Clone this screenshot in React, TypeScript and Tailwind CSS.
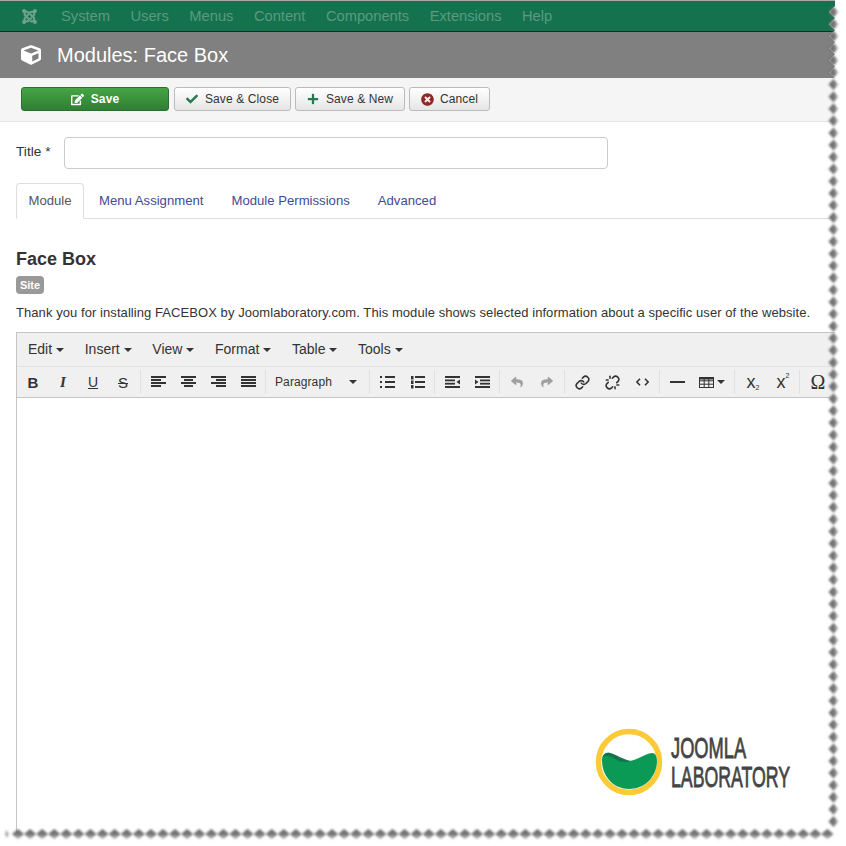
import React from "react";
import { FaJoomla, FaCube, FaEdit, FaCheck, FaPlus, FaTimesCircle, FaReply, FaShare } from "react-icons/fa";
import { Link, Unlink } from "lucide-react";

const Caret = ({ color = "#333" }: { color?: string }) => (
  <svg width="8" height="4" viewBox="0 0 8 4" className="shrink-0"><path d="M0 0h8L4 4z" fill={color} /></svg>
);

const Lines = ({ rows }: { rows: [number, number][] }) => (
  <svg width="15" height="12" viewBox="0 0 15 12">
    {rows.map(([x, w], i) => (
      <rect key={i} x={x} y={i * 3} width={w} height="2" fill="#333" />
    ))}
  </svg>
);

const Btn = ({ children, w = "w-[30px]" }: { children: React.ReactNode; w?: string }) => (
  <div className={`${w} h-[24px] flex items-center justify-center shrink-0 text-[#333]`}>{children}</div>
);

const Group = ({ children }: { children: React.ReactNode }) => (
  <div className="flex items-center ml-[2px] pl-[2px] h-[24px] border-l border-[#e0e0e0] shrink-0">{children}</div>
);

const ListIcon = ({ numbered }: { numbered?: boolean }) => (
  <svg width="15" height="13" viewBox="0 0 15 13" fill="#333">
    {[0, 5, 10].map((y) => <rect key={y} x="5" y={y} width="10" height="2" />)}
    {numbered
      ? [0, 4.5, 9].map((y) => <rect key={y} x="1" y={y} width="2.5" height="3.5" />)
      : [0, 5, 10].map((y) => <rect key={y} x="0" y={y} width="2" height="2" />)}
  </svg>
);

const Indent = ({ out }: { out?: boolean }) => (
  <svg width="15" height="12" viewBox="0 0 15 12" fill="#333">
    <rect x="0" y="0" width="15" height="2" />
    <rect x="0" y="10" width="15" height="2" />
    <rect x={out ? 0 : 5} y="3.5" width="10" height="1.8" />
    <rect x={out ? 0 : 5} y="6.8" width="10" height="1.8" />
    {out ? <path d="M15 3.5v5L11.5 6z" /> : <path d="M0 3.5v5L3.5 6z" />}
  </svg>
);

const TornEdge = () => {
  const P = 12.08;
  const right = Array.from({ length: 68 }, (_, k) => (k + 1) * P);
  const bottom = Array.from({ length: 68 }, (_, k) => 18 + k * P);
  let z = "";
  right.forEach((y) => { z += `L835 ${y - P / 2} L829 ${y} `; });
  const zig = `M0 0 L835 0 ${z} L835 835 L0 835 Z`;
  return (
    <svg aria-hidden="true" width="846" height="846" viewBox="0 0 846 846" className="absolute left-0 top-0 pointer-events-none">
      <defs>
        <filter id="soft" x="-30%" y="-30%" width="160%" height="160%"><feGaussianBlur stdDeviation="0.8" /></filter>
        <linearGradient id="gr" x1="0" y1="0" x2="1" y2="0">
          <stop offset="0" stopColor="#686868" /><stop offset="0.6" stopColor="#787878" /><stop offset="1" stopColor="#cccccc" />
        </linearGradient>
        <linearGradient id="gb" x1="0" y1="0" x2="0" y2="1">
          <stop offset="0" stopColor="#686868" /><stop offset="0.55" stopColor="#787878" /><stop offset="1" stopColor="#d8d8d8" />
        </linearGradient>
      </defs>
      <path d={`M0 0H846V846H0Z ${zig}`} fill="#fff" fillRule="evenodd" />
      <g filter="url(#soft)">
        {right.filter((y) => y < 826).map((y) => (
          <path key={y} d={`M828.5 ${y} L833.5 ${y - 5.5} L838.5 ${y} L833.5 ${y + 5.5}Z`} fill="url(#gr)" />
        ))}
        {bottom.filter((x) => x < 835).map((x) => (
          <path key={x} d={`M${x - 6} 834 L${x} 829 L${x + 6} 834 L${x} 839.5Z`} fill="url(#gb)" />
        ))}
        <path d="M6 830 L9 834 L7 838 L5 834Z" fill="#aaa" />
      </g>
    </svg>
  );
};

const Logo = () => (
  <svg width="256" height="80" viewBox="0 0 256 80" className="absolute left-[590px] top-[722px]">
    <circle cx="39" cy="40" r="30.5" fill="#fff" stroke="#fcc937" strokeWidth="5.5" />
    <path d="M12 38 C12 33 15 30 20 31 C27 33 31 39 39 39 C48 38 54 32 62 31 C66 31 67 35 67 40 C66 56 54 67 39 67 C24 67 12 55 12 38Z" fill="#0a9a55" />
    <path d="M13 35 C14 32 16 30 20 31 C27 33 32 37 40 38.7 C35 41 29 40 25 37 C21 34 16 33 13 35Z" fill="#13744e" />
    <text transform="translate(81 36) scale(0.63 1)" fontFamily="'Liberation Sans',sans-serif" stroke="#444" strokeWidth="0.8" fontSize="29" fill="#444">JOOMLA</text>
    <text transform="translate(81 65) scale(0.611 1)" fontFamily="'Liberation Sans',sans-serif" stroke="#444" strokeWidth="0.8" fontSize="29" fill="#444">LABORATORY</text>
  </svg>
);

export default function App() {
  const nav = ["System", "Users", "Menus", "Content", "Components", "Extensions", "Help"];
  const menus = ["Edit", "Insert", "View", "Format", "Table", "Tools"];
  return (
    <div className="relative w-[846px] h-[846px] overflow-hidden bg-white font-['Liberation_Sans',Arial,sans-serif] text-[#333]">
      <div className="h-px bg-[#aaa]" />
      <div className="h-[31px] bg-[#15724e] border-b border-[#0b2f24] flex items-center">
        <FaJoomla className="ml-[21px] w-[17px] h-[17px] text-[#6fa38c]" />
        <div className="ml-[23px] flex gap-[20.5px] text-[14.7px] text-[#5b9a7f]">
          {nav.map((n) => <span key={n}>{n}</span>)}
        </div>
      </div>
      <div className="h-[46px] bg-[#808080] flex items-center text-white">
        <FaCube className="ml-[21px] w-[20px] h-[20px]" />
        <span className="ml-[16px] text-[20px]">Modules: Face Box</span>
      </div>
      <div className="h-[44px] bg-[#f5f5f5] border-b border-[#e3e3e3] flex items-start pt-[9px] pl-[21px] gap-[5px] text-[12px] tracking-[0.12px]">
        <button className="w-[148px] h-[24px] rounded-[3px] border border-[#2d6e30] bg-gradient-to-b from-[#46a546] to-[#2f7f33] text-white font-bold flex items-center justify-center gap-[7px]">
          <FaEdit className="w-[13px] h-[13px]" /><span>Save</span>
        </button>
        <button className="w-[117px] h-[24px] rounded-[3px] border border-[#bbb] bg-gradient-to-b from-white to-[#e6e6e6] flex items-center justify-center gap-[7px]">
          <FaCheck className="w-[12px] h-[12px] text-[#26794f]" /><span>Save &amp; Close</span>
        </button>
        <button className="w-[110px] h-[24px] -ml-px rounded-[3px] border border-[#bbb] bg-gradient-to-b from-white to-[#e6e6e6] flex items-center justify-center gap-[7px]">
          <FaPlus className="w-[12px] h-[12px] text-[#26794f]" /><span>Save &amp; New</span>
        </button>
        <button className="w-[81px] h-[24px] -ml-px rounded-[3px] border border-[#bbb] bg-gradient-to-b from-white to-[#e6e6e6] flex items-center justify-center gap-[6px]">
          <FaTimesCircle className="w-[13px] h-[13px] text-[#8c2c25]" /><span>Cancel</span>
        </button>
      </div>

      <div className="pl-[16px] pt-[15px] flex items-center">
        <label className="w-[48px] text-[13.7px] leading-[31px] -mt-[3px]">Title *</label>
        <div className="w-[544px] h-[32px] rounded-[4px] border border-[#ccc] bg-white" />
      </div>

      <div className="mt-[14px] ml-[16px] h-[36px] w-[830px] border-b border-[#ddd] flex gap-[2px] text-[13.15px] text-[#3f4a99]">
        <div className="w-[68px] h-[36px] border border-[#ddd] border-b-white rounded-t-[4px] text-[#555] bg-white flex items-center justify-center">Module</div>
        <div className="h-[35px] px-[13px] flex items-center">Menu Assignment</div>
        <div className="h-[35px] px-[13px] flex items-center">Module Permissions</div>
        <div className="h-[35px] px-[13px] flex items-center">Advanced</div>
      </div>

      <div className="pl-[16px]">
        <h2 className="mt-[30px] text-[18px] leading-[20px] font-bold">Face Box</h2>
        <span className="mt-[7px] w-[28px] h-[18px] rounded-[4px] bg-[#999] text-white text-[11px] font-bold flex items-center justify-center">Site</span>
        <p className="mt-[10px] text-[13px] leading-[18px] tracking-[0.07px] whitespace-nowrap">
          Thank you for installing FACEBOX by Joomlaboratory.com. This module shows selected information about a specific user of the website.
        </p>
      </div>

      <div className="mt-[10px] ml-[16px] w-[830px] h-[520px] border border-[#c5c5c5]">
        <div className="h-[34px] bg-[#f0f0f0] border-b border-[#e2e2e2] flex items-center pl-[11px] gap-[20.6px] text-[14px] text-[#333]">
          {menus.map((m) => (
            <div key={m} className="flex items-center gap-[4px]"><span>{m}</span><Caret /></div>
          ))}
        </div>
        <div className="h-[31px] bg-[#f0f0f0] border-b border-[#c5c5c5] flex items-center pl-px">
          <Btn><span className="text-[15px] font-bold leading-none">B</span></Btn>
          <Btn><span className="text-[15px] italic leading-none font-['Liberation_Serif',serif] font-bold">I</span></Btn>
          <Btn><span className="text-[14px] leading-none underline font-medium">U</span></Btn>
          <Btn><span className="text-[15px] leading-none line-through">S</span></Btn>
          <Group>
            <Btn><Lines rows={[[0, 15], [0, 10], [0, 15], [0, 10]]} /></Btn>
            <Btn><Lines rows={[[0, 15], [3, 9], [0, 15], [3, 9]]} /></Btn>
            <Btn><Lines rows={[[0, 15], [5, 10], [0, 15], [5, 10]]} /></Btn>
            <Btn><Lines rows={[[0, 15], [0, 15], [0, 15], [0, 15]]} /></Btn>
          </Group>
          <Group>
            <div className="w-[99px] h-[24px] pl-[7px] pr-[10px] flex items-center justify-between text-[12px] tracking-[0.1px]">
              <span>Paragraph</span><Caret />
            </div>
          </Group>
          <Group>
            <Btn><ListIcon /></Btn>
            <Btn><ListIcon numbered /></Btn>
          </Group>
          <Group>
            <Btn><Indent out /></Btn>
            <Btn><Indent /></Btn>
          </Group>
          <Group>
            <Btn><FaReply className="w-[12px] h-[12px] text-[#a0a0a0]" /></Btn>
            <Btn><FaShare className="w-[12px] h-[12px] text-[#a0a0a0]" /></Btn>
          </Group>
          <Group>
            <Btn><Link size={15} strokeWidth={2.5} /></Btn>
            <Btn><Unlink size={15} strokeWidth={2.5} /></Btn>
            <Btn>
              <svg width="13" height="8" viewBox="0 0 13 8" fill="none" stroke="#333" strokeWidth="1.5"><path d="M4 .7L.9 4 4 7.3M9 .7L12.1 4 9 7.3" /></svg>
            </Btn>
          </Group>
          <Group>
            <Btn><div className="w-[15px] h-[2px] bg-[#333]" /></Btn>
            <Btn w="w-[40px]">
              <div className="flex items-center gap-[3px]">
                <svg width="15" height="11" viewBox="0 0 15 11" fill="none" stroke="#333" strokeWidth="1"><rect x=".5" y=".5" width="14" height="10" /><path d="M.5 3.8h14M.5 7.2h14M5.2.5v10M9.8.5v10" /><rect x=".5" y=".5" width="14" height="1.5" fill="#333" /></svg>
                <Caret />
              </div>
            </Btn>
          </Group>
          <Group>
            <Btn><span className="ml-[2px] text-[18px] leading-none">x<sub className="text-[7px] align-baseline">2</sub></span></Btn>
            <Btn><span className="ml-[2px] text-[18px] leading-none">x<sup className="text-[7px] align-[7px]">2</sup></span></Btn>
          </Group>
          <Group>
            <Btn><span className="ml-[2px] text-[20px] leading-none font-['Liberation_Serif',serif]">Ω</span></Btn>
          </Group>
        </div>
      </div>

      <Logo />
      <TornEdge />
    </div>
  );
}
